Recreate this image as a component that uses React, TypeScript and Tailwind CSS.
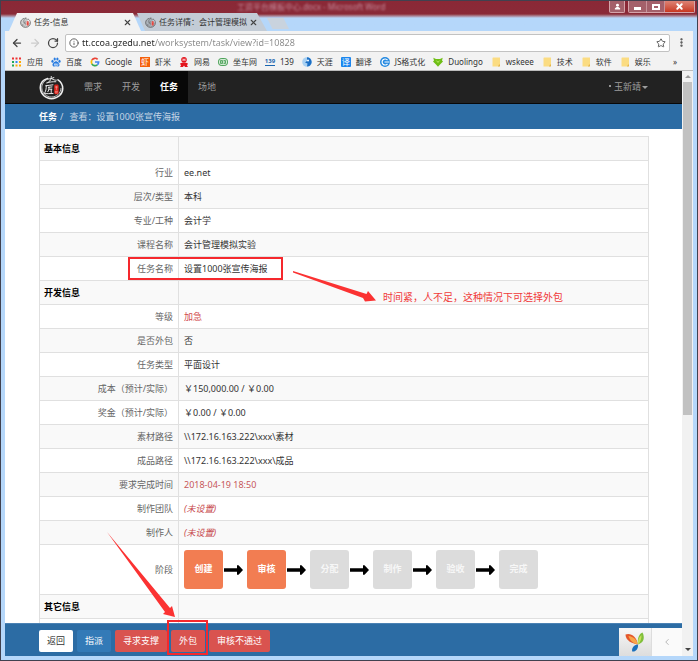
import React from "react";
import type { ReactNode } from "react";
import { ArrowLeft, ArrowRight, RotateCw, Info, Star, X, MoreVertical, ChevronLeft } from "lucide-react";

function BrandMark({ className, ink }: { className: string; ink: string }) {
  return (
    <svg viewBox="0 0 26 26" className={className} fill="none" stroke={ink} strokeLinecap="round" aria-hidden="true">
      <path d="M9 3.600C4 5 1 9 1.400 14c.5 6 5.400 10.600 11.600 10.600S24.600 20 24.700 14c0-4-2-7-5-9" strokeWidth="1.600" />
      <path d="M7.500 5.200C3.600 7.500 2.600 11 3 14.500c.8 5 5 8.300 9.800 8.400 5.500 0 9.800-3.700 10.100-9" strokeWidth=".8" />
      <path d="M9 4.400c2.500-.2 4.500-.8 6.500-1.700M12.800 1.500c0 2.200-.5 4.500-3.300 6.300M8 8.200c3-1 6-1.300 9.500-1.200M13.500 4c1.500 1 3 1.500 4.500 1.400" strokeWidth="1" />
      <path d="M7 11.200c2.400-.2 5-.7 7.500-1M7.600 11c0 3-.4 6-2.200 8.400 3 .2 6-.2 9.200-.2M9.800 12.800l3.700-.4M10.400 12.800c0 2-.3 3.500-1.200 4.600M10.400 14.800h3M12.700 14.800v3.400" strokeWidth="1" />
      <rect x="15.800" y="10" width="4.600" height="10" rx="1.500" fill="#e0241b" stroke="none" />
      <path d="M17 12.500h2.200M18.100 12v3M17 17h2.200M17 18.500h2" stroke="#f6b8b0" strokeWidth=".6" />
    </svg>
  );
}

function Tab({ title, active }: { title: string; active?: boolean }) {
  return (
    <div
      className={
        active
          ? "flex h-[18px] w-[132px] items-center bg-[#f2f2f2] pl-[11px] pr-[9px] [clip-path:polygon(0_100%,8px_0,124px_0,100%_100%)]"
          : "-ml-1 flex h-[18px] w-[130px] items-center bg-[#c3ccd6] pl-2 pr-[9px] [clip-path:polygon(8px_100%,0_0,120px_0,100%_100%)]"
      }
    >
      <BrandMark className="size-[11px] shrink-0" ink="#555" />
      <span className="ml-[3px] flex-1 whitespace-nowrap text-[8px] leading-[12px] text-[#333]">{title}</span>
      <button type="button" aria-label={"关闭 " + title} className="text-[#444]">
        <X className="size-[9px]" strokeWidth={3} />
      </button>
    </div>
  );
}

function Folder() {
  return (
    <svg viewBox="0 0 10 10" className="size-[10px]" aria-hidden="true">
      <path d="M2 .5h7V8H8v1.500H1.500V1z" fill="#fbdc82" />
      <path d="M8 7.500h1V9.500H7z" fill="#e3b54c" />
    </svg>
  );
}

const dots = ["#e33", "#e33", "#e33", "#2a5", "#38e", "#fa0", "#2a5", "#fa0", "#fa0"];

const bookmarks: { label: string; icon: ReactNode }[] = [
  {
    label: "应用",
    icon: (
      <svg viewBox="0 0 10 10" className="size-[10px]" aria-hidden="true">
        {dots.map((c, i) => (
          <rect key={i} x={(i % 3) * 3.5} y={Math.floor(i / 3) * 3.5 + 0.5} width="2" height="2" fill={c} />
        ))}
      </svg>
    ),
  },
  {
    label: "百度",
    icon: (
      <svg viewBox="0 0 10 10" className="size-[10px]" fill="#2a7de1" aria-hidden="true">
        <ellipse cx="1.500" cy="4.300" rx="1.100" ry="1.500" />
        <ellipse cx="3.700" cy="2" rx="1.100" ry="1.500" />
        <ellipse cx="6.400" cy="2" rx="1.100" ry="1.500" />
        <ellipse cx="8.500" cy="4.300" rx="1.100" ry="1.500" />
        <path d="M5 4.200c1.500 0 3.700 2.300 3.500 3.700C8.200 10 6.500 9.300 5 9.300s-3.200.7-3.500-1.400C1.300 6.500 3.500 4.200 5 4.200z" />
        <path d="M3.500 6.800h1.200v1.500H3.500zM5.600 6.500v1.800h1.300V6.500" fill="none" stroke="#fff" strokeWidth=".6" />
      </svg>
    ),
  },
  {
    label: "Google",
    icon: (
      <svg viewBox="0 0 10 10" className="size-[10px]" fill="none" strokeWidth="1.700" aria-hidden="true">
        <path d="M7.600 2.300A3.600 3.600 0 0 0 1.900 3.200" stroke="#ea4335" />
        <path d="M1.900 3.200a3.600 3.600 0 0 0 0 3.600" stroke="#fbbc05" />
        <path d="M1.900 6.800a3.600 3.600 0 0 0 5.400 1" stroke="#34a853" />
        <path d="M7.300 7.800A3.600 3.600 0 0 0 8.600 5H5" stroke="#4285f4" />
      </svg>
    ),
  },
  { label: "虾米", icon: <span className="flex size-[10px] items-center justify-center bg-[#f5600a] text-[8px] leading-[10px] text-white">虾</span> },
  {
    label: "网易",
    icon: (
      <svg viewBox="0 0 10 10" className="size-[10px]" aria-hidden="true">
        <circle cx="5" cy="2.800" r="2.800" fill="#e3141c" />
        <path d="M1 6.500c2.500-1.500 5.500-1.500 8 0L8 8.500 9 10H6L5 8.500 4 10H1l1-1.500z" fill="#e3141c" />
        <path d="M4 1.500v2.500M6 1.500v2.500M4 2.800h2" stroke="#fff" strokeWidth=".7" />
      </svg>
    ),
  },
  {
    label: "坐车网",
    icon: (
      <svg viewBox="0 0 10 10" className="size-[10px]" fill="none" stroke="#3d9a4c" aria-hidden="true">
        <rect x=".6" y="1.600" width="8.800" height="6.800" rx="2.500" fill="#e4f4e4" />
        <path d="M2.500 3.500h2v3h-2zM5.500 3.500h2v3h-2M2.500 5h2M5.500 5h2" strokeWidth=".8" />
      </svg>
    ),
  },
  { label: "139", icon: <span className="flex h-[8px] w-[10px] items-center justify-center border-b border-[#1b66b0] font-bold text-[6px] leading-[7px] text-[#1b66b0]">139</span> },
  {
    label: "天涯",
    icon: (
      <svg viewBox="0 0 10 10" className="size-[10px]" aria-hidden="true">
        <circle cx="5" cy="5" r="4.800" fill="#a9d1f3" />
        <path d="M5 .3a4.700 4.700 0 0 1 2.500 8.600L5 9.500l.5-3L3 5.500 5 4z" fill="#1c6fc4" />
        <circle cx="6" cy="3.500" r="1" fill="#fff" />
      </svg>
    ),
  },
  { label: "翻译", icon: <span className="flex size-[10px] items-center justify-center rounded-[1px] bg-[#1b86ee] text-[8px] leading-[10px] text-white">译</span> },
  {
    label: "JS格式化",
    icon: (
      <svg viewBox="0 0 10 10" className="size-[10px]" aria-hidden="true">
        <circle cx="5" cy="5" r="5" fill="#2489e0" />
        <path d="M7.500 3.200a3 3 0 1 0 0 3.600M4.500 5H9.500" fill="none" stroke="#fff" strokeWidth="1.200" />
      </svg>
    ),
  },
  {
    label: "Duolingo",
    icon: (
      <svg viewBox="0 0 10 10" className="size-[10px]" aria-hidden="true">
        <path d="M.3.800 3 2h4L9.700.8 9 3.500l1 1L7.500 7 5 9.700 2.500 7 0 4.500l1-1z" fill="#6fbe16" />
        <path d="M2.500 3 5 4.500 7.500 3 5 6z" fill="#b5e861" />
      </svg>
    ),
  },
  { label: "wskeee", icon: <Folder /> },
  { label: "技术", icon: <Folder /> },
  { label: "软件", icon: <Folder /> },
  { label: "娱乐", icon: <Folder /> },
];

const stages = [
  { name: "创建", done: true },
  { name: "审核", done: true },
  { name: "分配", done: false },
  { name: "制作", done: false },
  { name: "验收", done: false },
  { name: "完成", done: false },
];

function Stages() {
  return (
    <ol className="flex items-center">
      {stages.map((s, i) => (
        <li key={s.name} className="flex items-center">
          <span
            className={
              s.done
                ? "flex size-[39px] items-center justify-center rounded-[3px] bg-[#f27d52] pb-[2px] font-bold text-white"
                : "flex size-[39px] items-center justify-center rounded-[3px] bg-[#dcdcdc] pb-[2px] font-bold text-[#f7f7f7]"
            }
          >
            {s.name}
          </span>
          {i < stages.length - 1 && (
            <svg viewBox="0 0 24 12" className="h-3 w-6" aria-hidden="true">
              <path d="M1 4.200h13V1.200l1.500 0 4.500 4.800-4.500 4.800h-1.500V7.800h-13z" fill="#000" />
            </svg>
          )}
        </li>
      ))}
    </ol>
  );
}

const unset = <em className="text-[#c7474b]">(未设置)</em>;

type Row = { label: string; value?: ReactNode; section?: boolean; marked?: boolean };

const rows: Row[] = [
  { label: "基本信息", section: true },
  { label: "行业", value: "ee.net" },
  { label: "层次/类型", value: "本科" },
  { label: "专业/工种", value: "会计学" },
  { label: "课程名称", value: "会计管理模拟实验" },
  { label: "任务名称", value: "设置1000张宣传海报", marked: true },
  { label: "开发信息", section: true },
  { label: "等级", value: <span className="text-[#d1494c]">加急</span> },
  { label: "是否外包", value: "否" },
  { label: "任务类型", value: "平面设计" },
  { label: "成本（预计/实际）", value: "￥150,000.00 / ￥0.00" },
  { label: "奖金（预计/实际）", value: "￥0.00 / ￥0.00" },
  { label: "素材路径", value: "\\\\172.16.163.222\\xxx\\素材" },
  { label: "成品路径", value: "\\\\172.16.163.222\\xxx\\成品" },
  { label: "要求完成时间", value: <span className="text-[#c7575a]">2018-04-19 18:50</span> },
  { label: "制作团队", value: unset },
  { label: "制作人", value: unset },
  { label: "阶段", value: <Stages /> },
  { label: "其它信息", section: true },
  { label: "", value: "" },
];

function DetailTable() {
  return (
    <table className="w-full border-collapse border border-[#e0e0e0]">
      <tbody>
        {rows.map((r, i) => (
          <tr key={i} className="h-6 odd:bg-[#f9f9f9]">
            <th
              scope="row"
              className={
                r.section
                  ? "w-[139px] border border-[#e0e0e0] px-1 text-left font-bold text-black"
                  : "w-[139px] border border-[#e0e0e0] px-[5px] text-right font-normal text-[#666]"
              }
            >
              {r.label}
            </th>
            <td className={i === 17 ? "border border-[#e0e0e0] px-[5px] py-[5px] text-[#333]" : "border border-[#e0e0e0] px-[5px] text-[#333]"}>
              {r.marked ? (
                <div className="relative">
                  {r.value}
                  <span className="pointer-events-none absolute -bottom-1 -left-14 -top-[5px] w-[155px] border-2 border-[#f5282d]" />
                  <svg viewBox="0 0 84 31" className="pointer-events-none absolute left-[109px] top-[9px] h-[31px] w-[84px]" aria-hidden="true">
                    <path d="M0 0 0 1.500 70 27 72 30.500 83 29.500 75 20 73.500 23z" fill="#fb3232" />
                  </svg>
                  <p className="absolute left-[199px] top-[28px] whitespace-nowrap text-[10px] leading-[14px] text-[#f03a3a]">
                    时间紧，人不足，这种情况下可选择外包
                  </p>
                </div>
              ) : (
                r.value
              )}
            </td>
          </tr>
        ))}
      </tbody>
    </table>
  );
}

const danger = "h-[22px] rounded-[2px] bg-[#d9534f] px-2 text-white";

export default function App() {
  return (
    <div className="flex h-screen flex-col overflow-hidden border border-[#40414f] bg-[#b5d7fa] [font-family:'Noto_Sans','Noto_Sans_CJK_SC',sans-serif] text-[9px] leading-[14px]">
      <header className="shrink-0 bg-linear-to-b from-[#8a2836] from-[0px] via-[#8a2a38] via-[13px] to-[#b5d7fa] to-[17px]">
        <div className="flex h-3 items-start">
          <p className="ml-[236px] flex-1 whitespace-nowrap text-[8px] leading-[12px] text-[#c58a9a] blur-[1px]">工资平台模板中心.docx - Microsoft Word</p>
          <div className="flex gap-[3px] pr-[2px]">
            <button type="button" aria-label="用户" className="flex h-3 w-4 items-center justify-center rounded-b-[2px] border border-t-0 border-[#d5a4aa] bg-[#a4606a]">
              <svg viewBox="0 0 8 8" className="size-[7px]" fill="#fff" aria-hidden="true">
                <circle cx="4" cy="2.500" r="1.700" />
                <path d="M1 7.500V6l2-1.500h2L7 6v1.500z" />
              </svg>
            </button>
            <div className="flex overflow-hidden rounded-b-[2px] border border-t-0 border-[#d5a4aa]">
              <button type="button" aria-label="最小化" className="flex h-[11px] w-[18px] items-center justify-center border-r border-[#c7929a] bg-[#a4606a]">
                <span className="mt-1 h-[3px] w-[7px] bg-white" />
              </button>
              <button type="button" aria-label="最大化" className="flex h-[11px] w-[18px] items-center justify-center border-r border-[#c7929a] bg-[#a4606a]">
                <span className="h-[6px] w-[8px] border-2 border-white" />
              </button>
              <button type="button" aria-label="关闭" className="flex h-[11px] w-[29px] items-center justify-center bg-linear-to-b from-[#dd8274] to-[#c8361f] text-white">
                <X className="size-[9px]" strokeWidth={5} />
              </button>
            </div>
          </div>
        </div>
        <div className="flex items-end pl-2">
          <Tab title="任务-信息" active />
          <Tab title="任务详情：会计管理模拟" />
          <button type="button" aria-label="新标签页" className="mb-[2px] h-[11px] w-[22px] bg-[#c9d3de] [clip-path:polygon(0_0,75%_0,100%_100%,25%_100%)]" />
        </div>
      </header>

      <div className="mx-1 mb-1 flex min-h-0 flex-1 flex-col bg-white">
        <div className="flex h-[23px] shrink-0 items-center bg-[#f2f2f2] pl-[6px] pr-[6px] text-[#444]">
          <button type="button" aria-label="后退"><ArrowLeft className="size-3" strokeWidth={2.5} /></button>
          <button type="button" aria-label="前进" className="ml-[6px] text-[#ccc]"><ArrowRight className="size-3" strokeWidth={2.5} /></button>
          <button type="button" aria-label="刷新" className="ml-[6px]"><RotateCw className="size-3" strokeWidth={2.5} /></button>
          <div className="ml-[6px] flex h-[18px] flex-1 items-center rounded-[2px] border border-[#c2c2c2] bg-white px-[3px]">
            <Info className="size-[10px] shrink-0" />
            <input
              aria-label="网址"
              defaultValue="tt.ccoa.gzedu.net/worksystem/task/view?id=10828"
              className="ml-[3px] h-4 min-w-0 flex-1 bg-linear-to-r from-[#222] from-[73px] to-[#888] to-[73px] bg-clip-text text-[9px] text-transparent outline-none"
            />
            <button type="button" aria-label="收藏"><Star className="size-[10px]" strokeWidth={2} /></button>
          </div>
          <button type="button" aria-label="菜单" className="ml-[6px]"><MoreVertical className="size-[11px]" strokeWidth={3} /></button>
        </div>
        <nav aria-label="书签" className="flex h-[17px] shrink-0 items-center gap-2 border-b border-[#bbb] bg-[#f2f2f2] pl-[7px] pr-4 text-[8px] leading-[12px] text-[#333]">
          {bookmarks.map((b) => (
            <a key={b.label} href="#" className="flex shrink-0 items-center gap-[5px] whitespace-nowrap">
              {b.icon}
              {b.label}
            </a>
          ))}
          <button type="button" aria-label="更多书签" className="ml-auto">»</button>
        </nav>

        <div className="flex min-h-0 flex-1">
          <div className="flex min-w-0 flex-1 flex-col">
            <nav className="flex h-[33px] shrink-0 items-center border-b border-[#080808] bg-[#222] px-[34px] text-[#9d9d9d]">
              <BrandMark className="size-[25px]" ink="#eee" />
              <div className="ml-[10px] flex h-full">
                <a href="#" className="flex w-[38px] items-center justify-center">需求</a>
                <a href="#" className="flex w-[38px] items-center justify-center">开发</a>
                <a href="#" className="flex w-[38px] items-center justify-center bg-[#080808] font-bold text-white">任务</a>
                <a href="#" className="flex w-[38px] items-center justify-center">场地</a>
              </div>
              <button type="button" className="ml-auto flex items-center gap-px">
                <span className="mb-[3px] size-[2px] rounded-full bg-[#bbb]" />
                <span className="ml-[2px]">玉新靖</span>
                <span className="border-x-[3px] border-t-[3px] border-x-transparent border-t-[#9d9d9d]" />
              </button>
            </nav>
            <div className="flex h-[25px] shrink-0 items-center gap-[3px] bg-[#2c6ca4] px-[34px] text-[#c4d5e4]">
              <a href="#" className="font-bold text-white">任务</a>
              <span>/</span>
              <span className="ml-[3px]">查看：设置1000张宣传海报</span>
            </div>

            <main className="min-h-0 flex-1 overflow-hidden pl-[34px] pr-[33px] pt-[7px]">
              <DetailTable />
            </main>

            <footer className="flex h-[33px] shrink-0 items-end border-t border-[#4b82b4] bg-[#2c6ca4] pl-[34px]">
              <div className="mb-1 flex gap-1">
                <button type="button" className="h-[22px] rounded-[2px] bg-white px-2 text-[#333]">返回</button>
                <button type="button" className="h-[22px] rounded-[2px] bg-[#337ab7] px-2 text-white">指派</button>
                <button type="button" className={danger}>寻求支撑</button>
                <div className="relative">
                  <button type="button" className={danger}>外包</button>
                  <span className="pointer-events-none absolute -bottom-[3px] -left-1 -right-[3px] -top-[10px] border-2 border-[#f5282d]" />
                  <svg viewBox="0 0 68 86" className="pointer-events-none absolute -left-16 -top-[98px] h-[86px] w-[68px]" aria-hidden="true">
                    <path d="M0 0 63 76 65 74 68 85 56 82 58 80z" fill="#fb3232" />
                  </svg>
                </div>
                <button type="button" className={danger}>审核不通过</button>
              </div>
              <div className="ml-auto flex h-7">
                <a href="#" aria-label="Yii 调试" className="flex w-8 items-center justify-center bg-linear-to-b from-[#f7f7f7] to-[#ddd]">
                  <svg viewBox="0 0 20 20" className="size-5" aria-hidden="true">
                    <path d="M.5 2.500C5 .5 12 4 12.600 12.500 7 11.500 .5 8.500 .5 2.500z" fill="#e4572b" />
                    <path d="M3.500 4c5 .5 8.700 4 9.100 8.500C8.500 11.500 4.500 8.500 3.500 4z" fill="#f9a548" />
                    <path d="M17.500.5c2.500 5 1.500 10-4.500 12-.8-5 .5-10.500 4.500-12z" fill="#7fbf3a" />
                    <path d="M16.500 3c0 4-1 7-3.500 9.500-.3-4 .5-7 3.500-9.500z" fill="#c7e05b" />
                    <path d="M13 12.500c.5 4-2 7.500-5.800 7C6.500 16 8.500 13 13 12.500z" fill="#1b70bb" />
                  </svg>
                </a>
                <button type="button" aria-label="展开" className="flex w-[31px] items-center justify-center border-l border-[#ddd] bg-[#fafafa] text-[#aaa]">
                  <ChevronLeft className="size-[10px]" />
                </button>
              </div>
            </footer>
          </div>

          <div className="flex w-[11px] shrink-0 flex-col items-center bg-[#f1f1f1]" aria-hidden="true">
            <span className="mt-1 mb-1 border-x-[3px] border-b-[3px] border-x-transparent border-b-[#999]" />
            <span className="h-[57%] w-[9px] bg-[#c1c1c1]" />
            <span className="mt-auto mb-[5px] border-x-[3px] border-t-[3px] border-x-transparent border-t-[#444]" />
          </div>
        </div>
      </div>
    </div>
  );
}
